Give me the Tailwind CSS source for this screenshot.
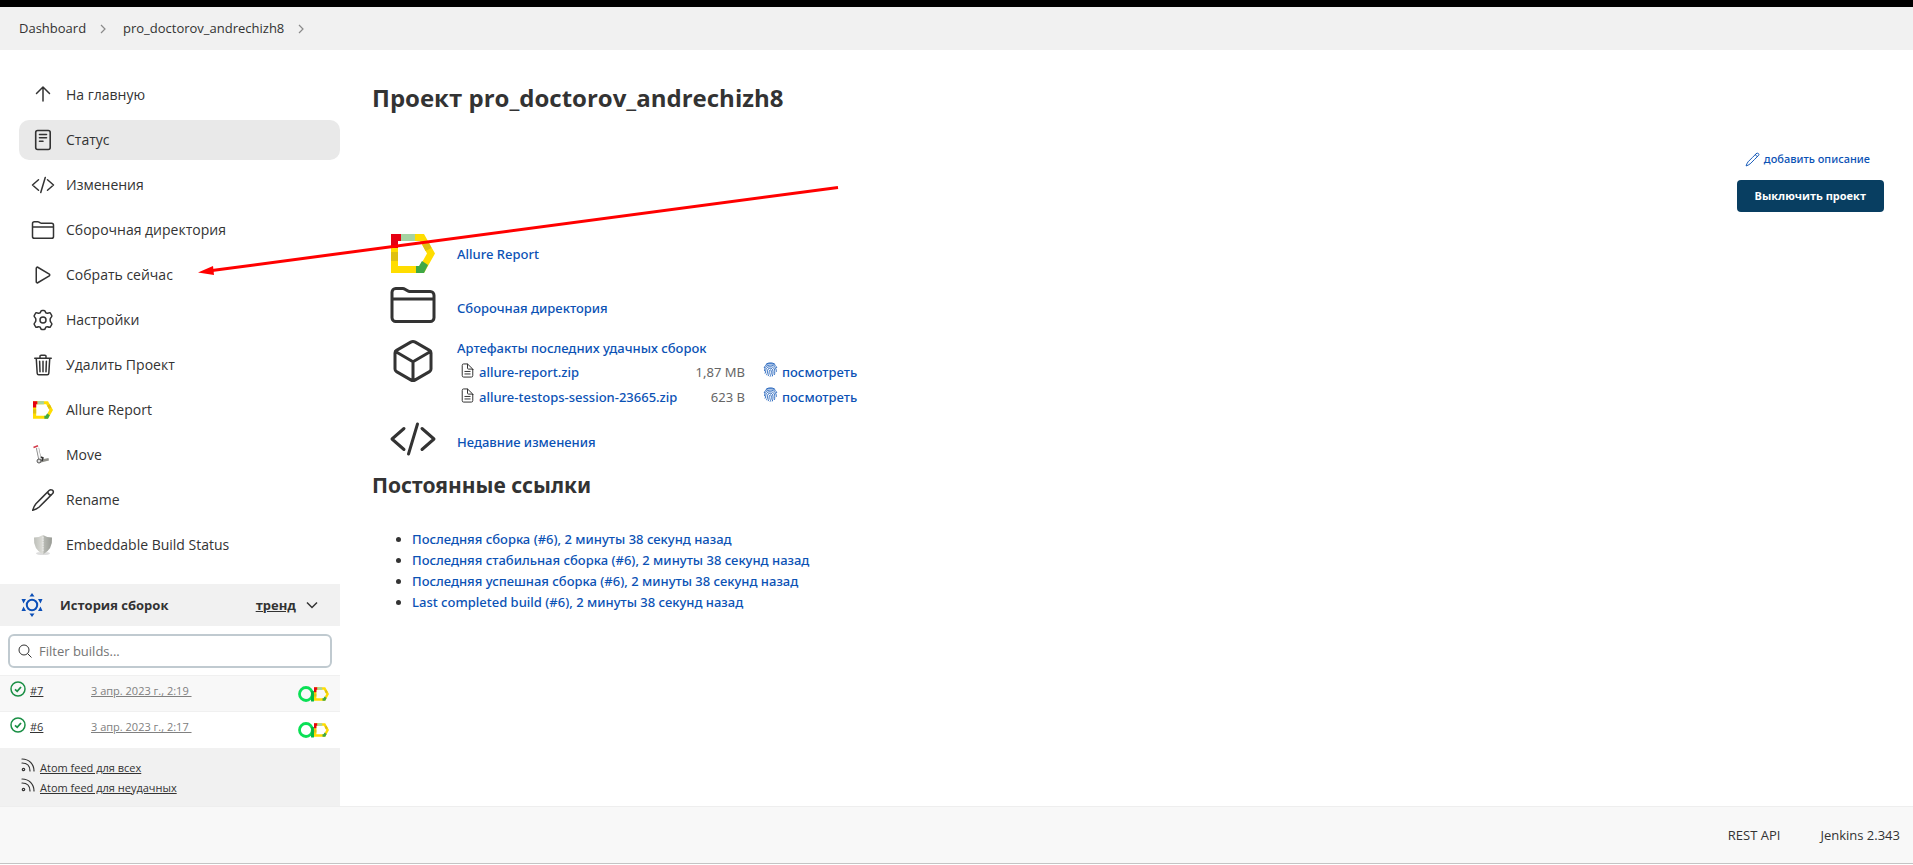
<!DOCTYPE html>
<html lang="ru">
<head>
<meta charset="utf-8">
<meta name="viewport" content="width=device-width, initial-scale=1">
<title>pro_doctorov_andrechizh8 [Jenkins]</title>
<script src="https://cdn.jsdelivr.net/npm/@tailwindcss/browser@4"></script>
</head>
<body class="relative flex min-h-screen flex-col bg-white font-['Open_Sans','Noto_Sans',sans-serif] text-sm text-[#333]">

<svg class="hidden" aria-hidden="true">
  <symbol id="allure" viewBox="0 0 44 39">
    <path fill="#ffdd00" d="M0 0H33L44 19.500L33 39H0ZM7 7V32H29L36 19.500L29 7Z"/>
    <path fill="#e60012" d="M0 0H10V7H7V14H0Z"/>
    <path fill="#a5d3a2" d="M10 0H24V7H10Z"/>
    <path fill="#dfc012" d="M0 18H7V27H0ZM31 10L37 7L40.500 14L34.500 17Z"/>
    <path fill="#3fa845" d="M25 39V32H28L31 27L37 31L33 39Z"/>
  </symbol>
  <symbol id="folder" viewBox="0 0 512 512">
    <g fill="none" stroke="currentColor" stroke-width="32" stroke-linecap="round" stroke-linejoin="round"><path d="M440 432H72a40 40 0 01-40-40V120a40 40 0 0140-40h75.890a40 40 0 0122.190 6.720l27.840 18.560a40 40 0 0022.190 6.720H440a40 40 0 0140 40v240a40 40 0 01-40 40zM32 192h448"/></g>
  </symbol>
  <symbol id="code" viewBox="0 0 512 512">
    <path fill="none" stroke="currentColor" stroke-width="32" stroke-linecap="round" stroke-linejoin="round" d="M160 368L32 256l128-112M352 368l128-112-128-112M304 96l-96 320"/>
  </symbol>
  <symbol id="pencil" viewBox="0 0 512 512">
    <path fill="none" stroke="currentColor" stroke-width="32" stroke-linecap="round" stroke-linejoin="round" d="M385 55C350 90 160 280 105 335C75 372 45 440 37 476C75 465 135 440 175 405C230 350 435 145 467 113C500 60 430 10 385 55ZM355 85C365 125 395 150 430 152"/>
  </symbol>
  <symbol id="doc" viewBox="0 0 512 512">
    <path fill="none" stroke="currentColor" stroke-width="34" stroke-linecap="round" stroke-linejoin="round" d="M436 221.250V432a48 48 0 01-48 48H124a48 48 0 01-48-48V80a48 48 0 0148-48h118.750a32 32 0 0122.620 9.370l161.260 157.260a32 32 0 019.370 22.620zM256 40v136a32 32 0 0032 32h136M166 288h180M166 374h180"/>
  </symbol>
  <symbol id="finger" viewBox="0 0 24 24">
    <path fill="none" stroke="currentColor" stroke-width="1.300" stroke-linecap="round" d="M5 3.500C9 .5 15 .5 19 3.500M2 9C4 3 10 2 14 2.800C18 3.500 21 6 22 9M2.500 14C2 8 6 5 12 5C18 5 21 9 21.500 15M3.500 18C5 15 4 12 5.500 10C8 6.500 16 6.500 18 11C19 14 19 17 18.500 20M6 20.500C8 17 6.500 14 8 11.500C10 9 14.500 9.500 15.500 12.500C16.500 16 16 20 15 22.500M8.500 22C10.500 19 9.500 15 10.500 13.500C11.500 12 13 12.500 13.200 14C13.800 18 12.500 21 11.500 23"/>
  </symbol>
  <symbol id="ok" viewBox="0 0 16 16">
    <circle cx="8" cy="8" r="7" fill="none" stroke="#1a8f45" stroke-width="1.500"/>
    <path d="M5 8.300L7.200 10.300L11 6" fill="none" stroke="#1a8f45" stroke-width="1.800"/>
  </symbol>
  <symbol id="feed" viewBox="0 0 14 14">
    <path d="M1 1C8 1 13 6 13 13M1 5C6 5 9 8 9 13" fill="none" stroke="currentColor" stroke-width="1.200" stroke-linecap="round"/><circle cx="2.500" cy="11.500" r="1.200" fill="none" stroke="currentColor" stroke-width="1.200"/>
  </symbol>
  <symbol id="testops" viewBox="0 0 16 16">
    <path d="M14.500 15V8A6.500 6.500 0 1 0 8 14.500C11 14.500 14.500 12 14.500 7" fill="none" stroke="#0ae055" stroke-width="2.800"/><path d="M14.500 5V15.500" stroke="#05b544" stroke-width="2.800"/>
  </symbol>
  <symbol id="chevron" viewBox="0 0 8 12"><path d="M2 2L6 6L2 10" fill="none" stroke="#8a8a8a" stroke-width="1.200"/></symbol>
</svg>

<header class="border-t-[7px] border-black bg-[#f1f1f1]">
  <nav class="flex h-[43px] items-center px-[19px] text-[13px]">
    <a href="#" class="w-16">Dashboard</a>
    <svg class="ml-4 h-3 w-2"><use href="#chevron"/></svg>
    <a href="#" class="ml-4 w-40">pro_doctorov_andrechizh8</a>
    <svg class="ml-3.5 h-3 w-2"><use href="#chevron"/></svg>
  </nav>
</header>

<div class="flex flex-1">
  <aside class="w-[340px] shrink-0 pt-[25px]">
    <nav class="flex flex-col gap-[5px] pl-[19px]">
      <a href="#" class="flex h-10 items-center gap-[11px] rounded-[10px] px-3">
        <svg class="size-6" viewBox="0 0 24 24" fill="none" stroke="currentColor" stroke-width="1.500" stroke-linecap="round" stroke-linejoin="round"><path d="M5.500 10.500L12 4L18.500 10.500M12 4.500V18"/></svg>На главную</a>
      <a href="#" class="flex h-10 items-center gap-[11px] rounded-[10px] bg-[#e9e9e9] px-3">
        <svg class="size-6" viewBox="0 0 24 24" fill="none" stroke="currentColor" stroke-width="1.600" stroke-linecap="round"><rect x="4.700" y="2.500" width="14.500" height="19" rx="2"/><path d="M8.500 6.500H15.500M8.500 9.800H15.500M8.500 13.200H12"/></svg>Статус</a>
      <a href="#" class="flex h-10 items-center gap-[11px] rounded-[10px] px-3"><svg class="size-6"><use href="#code"/></svg>Изменения</a>
      <a href="#" class="flex h-10 items-center gap-[11px] rounded-[10px] px-3"><svg class="size-6"><use href="#folder"/></svg>Сборочная директория</a>
      <a href="#" class="flex h-10 items-center gap-[11px] rounded-[10px] px-3">
        <svg class="size-6" viewBox="0 0 512 512" fill="none" stroke="currentColor" stroke-width="32"><path d="M112 111v290c0 17.440 17 28.520 31 20.160l247.900-148.370c12.120-7.250 12.120-26.330 0-33.580L143 90.840c-14-8.360-31 2.720-31 20.160z"/></svg>Собрать сейчас</a>
      <a href="#" class="flex h-10 items-center gap-[11px] rounded-[10px] px-3">
        <svg class="size-6" viewBox="0 0 24 24" fill="none" stroke="currentColor" stroke-width="1.500" stroke-linejoin="round"><circle cx="12" cy="12" r="3"/><path d="M9.800 3.500Q10 2.500 11 2.500H13Q14 2.500 14.200 3.500Q14.600 5.500 16.500 5.300Q18.500 4.500 19.300 5L20.800 7.700Q21 8.600 20.200 9.300Q19 10.500 19.100 12Q19 13.500 20.200 14.700Q21 15.400 20.800 16.300L19.300 19Q18.500 19.500 16.500 18.700Q14.600 18.500 14.200 20.500Q14 21.500 13 21.500H11Q10 21.500 9.800 20.500Q9.400 18.500 7.500 18.700Q5.500 19.500 4.700 19L3.200 16.300Q3 15.400 3.800 14.700Q5 13.500 4.900 12Q5 10.500 3.800 9.300Q3 8.600 3.200 7.700L4.700 5Q5.500 4.500 7.500 5.300Q9.400 5.500 9.800 3.500Z"/></svg>Настройки</a>
      <a href="#" class="flex h-10 items-center gap-[11px] rounded-[10px] px-3">
        <svg class="size-6" viewBox="0 0 512 512" fill="none" stroke="currentColor" stroke-width="32" stroke-linecap="round" stroke-linejoin="round"><path d="M112 112l20 320c.95 18.490 14.400 32 32 32h184c17.670 0 30.870-13.510 32-32l20-320M80 112h352M192 112V72a23.930 23.930 0 0124-24h80a23.930 23.930 0 0124 24v40M256 176v224M184 176l8 224M328 176l-8 224"/></svg>Удалить Проект</a>
      <a href="#" class="flex h-10 items-center gap-[11px] rounded-[10px] px-3"><svg class="size-6 p-0.5"><use href="#allure"/></svg>Allure Report</a>
      <a href="#" class="flex h-10 items-center gap-[11px] rounded-[10px] px-3">
        <svg class="size-6" viewBox="0 0 24 24" fill="none"><path d="M6.500 5L9 17" stroke="#888" stroke-width="3.200"/><path d="M6.700 5L9 16" stroke="#f8f8f8" stroke-width="1.800"/><path d="M2.500 4.500L7 2.700" stroke="#d33b4a" stroke-width="1.600"/><path d="M8 17L17.500 15L18 17.500L8 20Z" fill="#91918b"/><circle cx="8" cy="18" r="2" fill="#ddd" stroke="#555"/><path d="M10 14L12 15L11 18" stroke="#333" stroke-width="1.500"/></svg>Move</a>
      <a href="#" class="flex h-10 items-center gap-[11px] rounded-[10px] px-3"><svg class="size-6"><use href="#pencil"/></svg>Rename</a>
      <a href="#" class="flex h-10 items-center gap-[11px] rounded-[10px] px-3">
        <svg class="size-6" viewBox="0 0 24 24"><defs><linearGradient id="shield"><stop stop-color="#bdbfb9"/><stop offset=".5" stop-color="#deded9"/><stop offset=".55" stop-color="#b7b9b3"/><stop offset="1" stop-color="#999b95"/></linearGradient></defs><ellipse cx="12" cy="20.500" rx="7" ry="1.600" fill="#ddd"/><path d="M3 4.500Q8 4.500 12 2Q16 4.500 21 4.500Q22 16 12 21.500Q2 16 3 4.500Z" fill="url(#shield)"/><path d="M12 4V19" stroke="#eee" stroke-dasharray="1.500 1"/></svg>Embeddable Build Status</a>
    </nav>

    <section class="mt-[19px]">
      <div class="flex h-[42px] items-center bg-[#f1f1f1] pr-5 pl-[20px] text-[13px] font-bold">
        <svg class="size-6" viewBox="0 0 24 24"><circle cx="12" cy="12" r="5.200" fill="none" stroke="#0b4fb8" stroke-width="2"/><path fill="#0b4fb8" d="M12 0L14.500 3.500H9.500ZM12 24L14.500 20.500H9.500ZM1.500 6L6 6L3.500 10.500ZM22.500 6L18 6L20.500 10.500ZM1.500 18L6 18L3.500 13.500ZM22.500 18L18 18L20.500 13.500Z"/></svg>
        <h2 class="ml-4">История сборок</h2>
        <a href="#" class="ml-auto underline">тренд</a>
        <button type="button" aria-label="Свернуть" class="ml-2"><svg class="size-4" viewBox="0 0 16 16"><path d="M3 5.500L8 10.500L13 5.500" fill="none" stroke="#333" stroke-width="1.500"/></svg></button>
      </div>
      <div class="px-2 pt-2 pb-[7px]">
        <label class="flex h-[34px] items-center gap-[7px] rounded-md border-2 border-[#c0cad0] px-2 text-[13px]">
          <svg class="size-[14px] shrink-0" viewBox="0 0 14 14" fill="none" stroke="#333" stroke-width="1"><circle cx="6" cy="6" r="5"/><path d="M9.600 9.600L13.500 13.500"/></svg>
          <input type="text" aria-label="Filter builds" placeholder="Filter builds..." class="min-w-0 flex-1 outline-none placeholder:text-[#757575]">
        </label>
      </div>
      <table class="w-full table-fixed text-[11px] leading-4">
        <tr class="h-9 border-t border-[#f0f0f0] bg-[#f8f8f8] align-top">
          <td class="w-[91px] pt-[5px] pl-2.5"><a href="#" class="flex items-start gap-1"><svg class="size-4"><use href="#ok"/></svg><span class="pt-0.5 underline">#7</span></a></td>
          <td class="pt-[7px]"><a href="#" class="whitespace-pre text-[#808080] underline">3 апр. 2023 г., 2:19 </a></td>
          <td class="w-[42px] pt-2.5"><a href="#" class="flex" aria-label="Allure"><svg class="size-4"><use href="#testops"/></svg><svg class="h-4 w-[15px]"><use href="#allure"/></svg></a></td>
        </tr>
        <tr class="h-9 border-t border-[#f0f0f0] align-top">
          <td class="pt-[5px] pl-2.5"><a href="#" class="flex items-start gap-1"><svg class="size-4"><use href="#ok"/></svg><span class="pt-0.5 underline">#6</span></a></td>
          <td class="pt-[7px]"><a href="#" class="whitespace-pre text-[#808080] underline">3 апр. 2023 г., 2:17 </a></td>
          <td class="pt-2.5"><a href="#" class="flex" aria-label="Allure"><svg class="size-4"><use href="#testops"/></svg><svg class="h-4 w-[15px]"><use href="#allure"/></svg></a></td>
        </tr>
      </table>
      <div class="flex h-[58px] flex-col bg-[#f1f1f1] pt-2.5 pl-[21px] text-[11px] leading-5">
        <a href="#" class="flex gap-[5px]"><svg class="size-[14px]"><use href="#feed"/></svg><span class="underline">Atom feed для всех</span></a>
        <a href="#" class="flex gap-[5px]"><svg class="size-[14px]"><use href="#feed"/></svg><span class="underline">Atom feed для неудачных</span></a>
      </div>
    </section>
  </aside>

  <main class="flex-1 pt-[30px] pr-[29px] pl-8">
    <h1 class="text-2xl leading-9 font-bold">Проект pro_doctorov_andrechizh8</h1>
    <div class="mt-8 flex h-[65px] flex-col items-end gap-2.5">
      <a href="#" class="flex items-center gap-1 pr-3.5 font-['Noto_Sans',sans-serif] text-[11px] leading-[22px] font-medium text-[#0b52b5]"><svg class="size-[15px]"><use href="#pencil"/></svg>добавить описание</a>
      <button type="button" class="h-8 rounded bg-[#083e61] px-[18px] text-[11px] font-bold text-white">Выключить проект</button>
    </div>
    <div class="mt-4 grid grid-cols-[48px_1fr] gap-x-[19px] pl-[18px] font-['Noto_Sans',sans-serif] text-[13px] font-medium text-[#0b52b5]">
      <svg class="mt-[5px] ml-px h-[39px] w-11"><use href="#allure"/></svg>
      <a href="#" class="h-[52px] pt-4">Allure Report</a>
      <svg class="-ml-px size-12 text-[#333]"><use href="#folder"/></svg>
      <a href="#" class="h-14 pt-[18px]">Сборочная директория</a>
      <svg class="-ml-px size-12 text-[#333]" viewBox="0 0 512 512" fill="none" stroke="currentColor" stroke-width="32" stroke-linecap="round" stroke-linejoin="round"><path d="M448 341.370V170.610A32 32 0 00432.110 143l-152-88.460a47.940 47.940 0 00-48.240 0L79.890 143A32 32 0 0064 170.610v170.760A32 32 0 0079.890 369l152 88.460a48 48 0 0048.240 0l152-88.460A32 32 0 00448 341.370zM69 153.990l187 110 187-110M256 463.990v-200"/></svg>
      <div class="h-[78px]">
        <a href="#" class="block leading-[23px]">Артефакты последних удачных сборок</a>
        <table class="leading-[25px] whitespace-nowrap">
          <tr><td class="w-[234px] pl-[3px]"><a href="#" class="flex gap-1"><svg class="mt-[3px] size-[15px] text-[#333]"><use href="#doc"/></svg>allure-report.zip</a></td><td class="w-[54px] text-right font-normal text-[#666]">1,87 MB</td><td class="pl-[18px]"><a href="#" class="flex gap-1"><svg class="mt-0.5 size-[15px]"><use href="#finger"/></svg>посмотреть</a></td></tr>
          <tr><td class="pl-[3px]"><a href="#" class="flex gap-1"><svg class="mt-[3px] size-[15px] text-[#333]"><use href="#doc"/></svg>allure-testops-session-23665.zip</a></td><td class="text-right font-normal text-[#666]">623 B</td><td class="pl-[18px]"><a href="#" class="flex gap-1"><svg class="mt-0.5 size-[15px]"><use href="#finger"/></svg>посмотреть</a></td></tr>
        </table>
      </div>
      <svg class="-ml-px size-12 text-[#333]"><use href="#code"/></svg>
      <a href="#" class="h-[50px] pt-[18px]">Недавние изменения</a>
    </div>
    <h2 class="mt-1 font-['Noto_Sans',sans-serif] text-[21px] leading-8 font-bold">Постоянные ссылки</h2>
    <ul class="mt-7 list-disc pl-10 font-['Noto_Sans',sans-serif] text-[13px] leading-[21px] font-medium text-[#0b52b5] marker:text-[#333]">
      <li><a href="#">Последняя сборка (#6), 2 минуты 38 секунд назад</a></li>
      <li><a href="#">Последняя стабильная сборка (#6), 2 минуты 38 секунд назад</a></li>
      <li><a href="#">Последняя успешная сборка (#6), 2 минуты 38 секунд назад</a></li>
      <li><a href="#">Last completed build (#6), 2 минуты 38 секунд назад</a></li>
    </ul>
  </main>
</div>

<footer class="mb-px flex h-[58px] items-center justify-end gap-10 border-t border-b border-t-[#eee] border-b-[#c4c4c4] bg-[#f8f8f8] pr-[13px] text-[13px]">
  <a href="#">REST API</a>
  <a href="#">Jenkins 2.343</a>
</footer>

<svg class="pointer-events-none absolute top-[180px] left-[190px] h-[100px] w-[660px]" viewBox="190 180 660 100" aria-hidden="true"><path d="M838 187.500L212 270.500" stroke="#f00" stroke-width="3"/><path d="M198 272.500L213 266L214 275Z" fill="#f00"/></svg>
</body>
</html>
